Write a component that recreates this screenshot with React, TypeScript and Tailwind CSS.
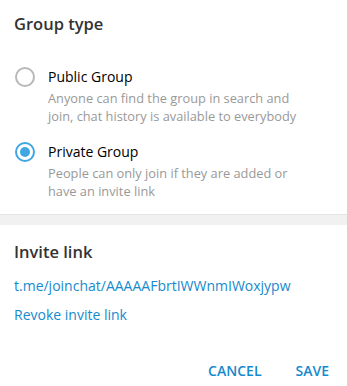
export default function App() {
  const options = [
    {
      title: "Public Group",
      lines: ["Anyone can find the group in search and", "join, chat history is available to everybody"],
      checked: false,
    },
    {
      title: "Private Group",
      lines: ["People can only join if they are added or", "have an invite link"],
      checked: true,
    },
  ];

  return (
    <div className="flex h-[386px] w-[347px] flex-col overflow-hidden bg-white font-['Open_Sans',sans-serif]">
      <h2 className="mt-[14px] px-[14px] text-[16.5px] font-semibold leading-[20px] text-[#333333]">Group type</h2>

      {/* Radio options */}
      <div className="mt-[33px] flex flex-col gap-[17px]">
        {options.map((opt) => (
          <label key={opt.title} className="flex gap-[13px] pl-[15px]">
            {opt.checked ? (
              <span className="flex size-[20px] shrink-0 items-center justify-center rounded-full border-2 border-[#40a7e3]">
                <span className="size-[10px] rounded-full bg-[#40a7e3]" />
              </span>
            ) : (
              <span className="size-[20px] shrink-0 rounded-full border-2 border-[#b8b8b8]" />
            )}
            <div className="flex flex-col">
              <span className="text-[14px] leading-[20px] text-black">{opt.title}</span>
              <p className="mt-[2px] text-[12.8px] leading-[18px] text-[#999999]">
                {opt.lines[0]}
                <br />
                {opt.lines[1]}
              </p>
            </div>
          </label>
        ))}
      </div>

      {/* Divider */}
      <div className="mt-[14px] h-[11px] border-t border-[#e4e4e4] bg-[#f1f1f1]" />

      <h3 className="mt-[17px] px-[14px] text-[16.5px] font-semibold leading-[20px] text-[#333333]">Invite link</h3>
      <a className="mt-[14px] px-[14px] text-[14px] leading-[20px] text-[#168acd]">
        t.me/joinchat/AAAAAFbrtIWWnmIWoxjypw
      </a>
      <a className="mt-[9px] px-[14px] text-[14px] leading-[20px] text-[#168acd]">Revoke invite link</a>

      {/* Buttons */}
      <div className="mt-[36px] flex justify-end gap-[34px] pr-[18px]">
        <button className="text-[14px] font-semibold leading-[20px] text-[#168acd]">CANCEL</button>
        <button className="text-[14px] font-semibold leading-[20px] text-[#168acd]">SAVE</button>
      </div>
    </div>
  );
}
